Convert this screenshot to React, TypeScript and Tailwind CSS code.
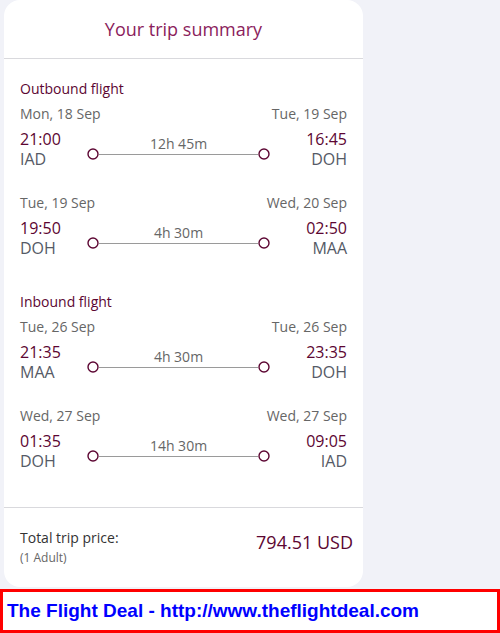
import React from "react";

type Seg = {
  d1: string;
  d2: string;
  t1: string;
  t2: string;
  c1: string;
  c2: string;
  dur: string;
};

const outbound: Seg[] = [
  { d1: "Mon, 18 Sep", d2: "Tue, 19 Sep", t1: "21:00", t2: "16:45", c1: "IAD", c2: "DOH", dur: "12h 45m" },
  { d1: "Tue, 19 Sep", d2: "Wed, 20 Sep", t1: "19:50", t2: "02:50", c1: "DOH", c2: "MAA", dur: "4h 30m" },
];
const inbound: Seg[] = [
  { d1: "Tue, 26 Sep", d2: "Tue, 26 Sep", t1: "21:35", t2: "23:35", c1: "MAA", c2: "DOH", dur: "4h 30m" },
  { d1: "Wed, 27 Sep", d2: "Wed, 27 Sep", t1: "01:35", t2: "09:05", c1: "DOH", c2: "IAD", dur: "14h 30m" },
];

function Circle() {
  return (
    <svg width="12" height="12" viewBox="0 0 12 12" className="shrink-0">
      <circle cx="6" cy="6" r="5" fill="white" stroke="#5c0632" strokeWidth="1.4" />
    </svg>
  );
}

function Segment({ s, first }: { s: Seg; first: boolean }) {
  return (
    <div className={first ? "mt-[5px]" : "mt-[23px]"}>
      <div className="flex justify-between h-[20px] leading-[20px] text-[14px] text-[#666666]">
        <span>{s.d1}</span>
        <span>{s.d2}</span>
      </div>
      <div className="flex mt-[5px]">
        <div className="w-[67px] flex flex-col">
          <span className="h-[20px] leading-[20px] text-[16px] text-[#5c0632]">{s.t1}</span>
          <span className="h-[21px] leading-[21px] text-[16px] text-[#555a66]">{s.c1}</span>
        </div>
        <div className="flex-1 flex flex-col">
          <div className="h-[19px]" />
          <div className="relative flex items-center h-[12px]">
            <Circle />
            <div className="flex-1 h-px bg-[#9a9a9a]" />
            <Circle />
            <span className="absolute left-0 right-0 -top-[14px] text-center text-[14px] leading-[20px] text-[#666666]">
              {s.dur}
            </span>
          </div>
        </div>
        <div className="w-[77px] flex flex-col items-end">
          <span className="h-[20px] leading-[20px] text-[16px] text-[#5c0632]">{s.t2}</span>
          <span className="h-[21px] leading-[21px] text-[16px] text-[#555a66]">{s.c2}</span>
        </div>
      </div>
    </div>
  );
}

function Section({ label, segs, top }: { label: string; segs: Seg[]; top: string }) {
  return (
    <div className={top}>
      <div className="h-[20px] leading-[20px] text-[14px] text-[#5c0632]">{label}</div>
      {segs.map((s, i) => (
        <Segment key={i} s={s} first={i === 0} />
      ))}
    </div>
  );
}

export default function App() {
  return (
    <div
      className="w-[500px] h-[633px] bg-[#f1f2f8] flex flex-col overflow-hidden"
      style={{ fontFamily: '"Open Sans", "Noto Sans", sans-serif' }}
    >
      <div className="ml-[4px] w-[359px] h-[587px] bg-white rounded-[16px] flex flex-col">
        <div className="h-[59px] flex items-center justify-center border-b border-[#d9d9dd]">
          <span className="text-[18px] leading-[24px] text-[#8b1d5c]">Your trip summary</span>
        </div>
        <div className="px-[16px] pt-[20px] pb-[35px] border-b border-[#d9d9dd]">
          <Section label="Outbound flight" segs={outbound} top="" />
          <Section label="Inbound flight" segs={inbound} top="mt-[33px]" />
        </div>
        <div className="flex justify-between pl-[16px] pr-[10px] pt-[20px]">
          <div className="flex flex-col">
            <span className="h-[20px] leading-[20px] text-[14px] text-[#333333]">Total trip price:</span>
            <span className="mt-[1px] h-[18px] leading-[18px] text-[12px] text-[#666666]">(1 Adult)</span>
          </div>
          <span className="mt-[1px] text-[18px] leading-[26px] text-[#5c0632]">794.51 USD</span>
        </div>
      </div>
      <div className="mt-[2px] h-[44px] border-[3px] border-[#ff0000] bg-white flex items-center pl-[4px]">
        <span
          className="text-[19px] font-bold text-[#0000ff] leading-[22px]"
          style={{ fontFamily: '"Liberation Sans", Arial, sans-serif' }}
        >
          The Flight Deal - http://www.theflightdeal.com
        </span>
      </div>
    </div>
  );
}
